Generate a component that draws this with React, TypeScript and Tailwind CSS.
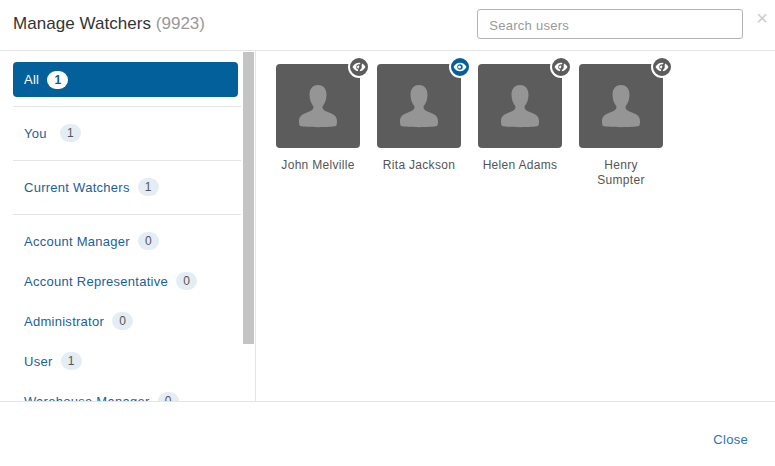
const font = "font-['Liberation_Sans',Arial,sans-serif]"

function Count({ n, active }: { n: number; active?: boolean }) {
  return (
    <span
      className={`ml-[8px] flex h-[18px] w-[21px] items-center justify-center rounded-full text-[12px] tracking-normal ${
        active ? "bg-white font-bold text-[#04609a]" : "bg-[#e4ecf4] text-[#555555]"
      }`}
    >
      {n}
    </span>
  )
}

function Filter({ label, n, className, labelClass }: { label: string; n: number; className?: string; labelClass?: string }) {
  return (
    <div className={`flex h-[40px] shrink-0 items-center pl-[11px] text-[13px] tracking-[0.27px] text-[#1c5f94] ${className ?? ""}`}>
      <span className={`pt-[2px] ${labelClass ?? ""}`}>{label}</span>
      <Count n={n} />
    </div>
  )
}

function EyeBadge({ on }: { on?: boolean }) {
  return (
    <span
      className={`absolute right-[-10px] top-[-8px] flex h-[22px] w-[22px] items-center justify-center rounded-full border-2 border-white ${
        on ? "bg-[#04609a]" : "bg-[#5c5c5c]"
      }`}
    >
      <svg width="14" height="12" viewBox="0 0 14 12">
        <path
          d="M0.500 6C2 3.200 4.300 1.700 7 1.700S12 3.200 13.500 6C12 8.800 9.700 10.300 7 10.300S2 8.800 0.500 6Z"
          fill="white"
        />
        <circle cx="7" cy="6" r="2.700" fill={on ? "#04609a" : "#5c5c5c"} />
        <circle cx="6.500" cy="6" r="1.500" fill="white" />
        {!on && <path d="M10 0L6.200 12" stroke="#5c5c5c" strokeWidth="1.800" />}
      </svg>
    </span>
  )
}

function User({ name, on }: { name: string; on?: boolean }) {
  return (
    <div className="flex w-[84px] flex-col items-center">
      <div className="relative flex h-[84px] w-[84px] items-center justify-center rounded-[4px] bg-[#5c5c5c]">
        <svg width="40" height="44" viewBox="0 0 40 44">
          <path
            d="M20 1C14 1 11.500 5.500 11.500 11C11.500 16 13.500 20 15.500 22.500C15.500 25.500 14 26.500 9 28.500C4 30.500 1 32 1 37.500C1 40 1.500 41.500 2 42C8 43.500 32 43.500 38 42C38.500 41.500 39 40 39 37.500C39 32 36 30.500 31 28.500C26 26.500 24.500 25.500 24.500 22.500C26.500 20 28.500 16 28.500 11C28.500 5.500 26 1 20 1Z"
            fill="#959595"
          />
        </svg>
        <EyeBadge on={on} />
      </div>
      <div className="mt-[10px] w-[76px] text-center text-[12px] leading-[15px] tracking-[0.3px] text-[#555555]">{name}</div>
    </div>
  )
}

export default function App() {
  return (
    <div className={`flex h-[466px] w-[775px] flex-col overflow-hidden bg-white ${font}`}>
      <header className="flex h-[51px] shrink-0 items-start border-b border-[#e5e5e5] pl-[13px]">
        <h1 className="mt-[14px] text-[17px] leading-[20px] tracking-[0.04px] text-[#333333]">
          Manage Watchers <span className="text-[#999999]">(9923)</span>
        </h1>
        <input
          placeholder="Search users"
          className="ml-auto mt-[9px] h-[30px] w-[266px] rounded-[3px] border border-[#b3b3b3] px-[11px] pt-[2px] text-[13px] tracking-[0.27px] placeholder:text-[#999999]"
        />
        <span className="ml-[13px] mr-[7px] mt-[6px] text-[20px] leading-[24px] text-[#cccccc]">×</span>
      </header>

      <div className="flex h-[350px] shrink-0">
        <aside className="flex w-[256px] shrink-0 border-r border-[#e5e5e5]">
          <div className="flex w-[243px] shrink-0 flex-col overflow-hidden pl-[13px] pr-[2px] pt-[11px]">
            <div className="flex h-[35px] w-[225px] shrink-0 items-center rounded-[4px] bg-[#04609a] pl-[11px] text-[13px] tracking-[0.27px] text-white">
              <span className="font-medium">All</span>
              <Count n={1} active />
            </div>
            <div className="mt-[9px] h-px shrink-0 bg-[#e5e5e5]" />
            <Filter label="You" n={1} className="mt-[6px]" labelClass="pr-[5px]" />
            <div className="mt-[7px] h-px shrink-0 bg-[#e5e5e5]" />
            <Filter label="Current Watchers" n={1} className="mt-[6px]" />
            <div className="mt-[7px] h-px shrink-0 bg-[#e5e5e5]" />
            <Filter label="Account Manager" n={0} className="mt-[6px]" />
            <Filter label="Account Representative" n={0} />
            <Filter label="Administrator" n={0} />
            <Filter label="User" n={1} />
            <Filter label="Warehouse Manager" n={0} />
          </div>
          <div className="mt-[1px] h-[292px] w-[11px] bg-[#c4c4c4]" />
        </aside>
        <main className="flex items-start gap-[17px] pl-[20px] pt-[13px]">
          <User name="John Melville" />
          <User name="Rita Jackson" on />
          <User name="Helen Adams" />
          <User name="Henry Sumpter" />
        </main>
      </div>

      <footer className="flex flex-1 items-start justify-end border-t border-[#e5e5e5] pr-[27px] pt-[30px]">
        <span className="text-[13px] leading-[16px] tracking-[0.3px] text-[#2a76ad]">Close</span>
      </footer>
    </div>
  )
}
